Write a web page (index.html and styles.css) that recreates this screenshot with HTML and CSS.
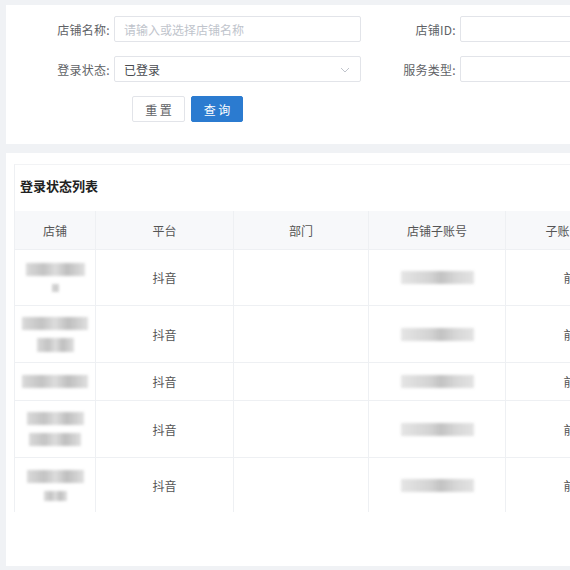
FILE: index.html
```html
<!DOCTYPE html>
<html lang="zh">
<head>
<meta charset="utf-8">
<link rel="stylesheet" href="styles.css">
</head>
<body>
<div class="page">
  <section class="card search">
    <div class="form-row">
      <div class="item">
        <label class="label l1">店铺名称:</label>
        <div class="input"><span class="ph">请输入或选择店铺名称</span></div>
      </div>
      <div class="item">
        <label class="label l2">店铺ID:</label>
        <div class="input"></div>
      </div>
    </div>
    <div class="form-row">
      <div class="item">
        <label class="label l1">登录状态:</label>
        <div class="input select"><span class="val">已登录</span>
          <svg class="chev" width="10" height="6" viewBox="0 0 10 6"><path d="M1 1l4 4 4-4" fill="none" stroke="#c0c4cc" stroke-width="1"/></svg>
        </div>
      </div>
      <div class="item">
        <label class="label l2">服务类型:</label>
        <div class="input"></div>
      </div>
    </div>
    <div class="btns">
      <button class="btn">重 置</button>
      <button class="btn primary">查 询</button>
    </div>
  </section>

  <section class="card list">
    <div class="box">
      <h2 class="title">登录状态列表</h2>
      <div class="table">
        <div class="tr th">
          <div class="c c1">店铺</div>
          <div class="c c2">平台</div>
          <div class="c c3">部门</div>
          <div class="c c4">店铺子账号</div>
          <div class="c c5">子账号登录状态</div>
        </div>
        <div class="tr r56">
          <div class="c c1 stack"><span class="blur w59"></span><span class="blur w7"></span></div>
          <div class="c c2">抖音</div>
          <div class="c c3"></div>
          <div class="c c4"><span class="blur w73"></span></div>
          <div class="c c5">前台在线</div>
        </div>
        <div class="tr r57">
          <div class="c c1 stack"><span class="blur w66"></span><span class="blur w37 tall"></span></div>
          <div class="c c2">抖音</div>
          <div class="c c3"></div>
          <div class="c c4"><span class="blur w73"></span></div>
          <div class="c c5">前台在线</div>
        </div>
        <div class="tr r38">
          <div class="c c1 stack"><span class="blur w66"></span></div>
          <div class="c c2">抖音</div>
          <div class="c c3"></div>
          <div class="c c4"><span class="blur w73"></span></div>
          <div class="c c5">前台在线</div>
        </div>
        <div class="tr r57">
          <div class="c c1 stack"><span class="blur w57"></span><span class="blur w52"></span></div>
          <div class="c c2">抖音</div>
          <div class="c c3"></div>
          <div class="c c4"><span class="blur w73"></span></div>
          <div class="c c5">前台在线</div>
        </div>
        <div class="tr r54 last">
          <div class="c c1 stack"><span class="blur w57"></span><span class="blur w23"></span></div>
          <div class="c c2">抖音</div>
          <div class="c c3"></div>
          <div class="c c4"><span class="blur w73"></span></div>
          <div class="c c5">前台在线</div>
        </div>
      </div>
    </div>
  </section>
</div>
</body>
</html>
```

FILE: styles.css
```css
html, body {
  margin: 0;
  padding: 0;
}
body {
  background: #f0f2f5;
  font-family: "Noto Sans CJK SC", "Noto Sans", sans-serif;
  font-size: 12px;
  color: #606266;
  overflow: hidden;
  width: 570px;
  height: 570px;
}
.page {
  padding: 5px 0 0 6px;
  display: flex;
  flex-direction: column;
  gap: 9px;
  width: 800px;
}
.card {
  background: #fff;
}
.search {
  height: 139px;
  box-sizing: border-box;
  padding-top: 11px;
  display: flex;
  flex-direction: column;
  gap: 14px;
}
.form-row {
  display: flex;
  height: 26px;
}
.item {
  display: flex;
  align-items: center;
}
.label {
  box-sizing: border-box;
  text-align: right;
  padding-right: 4px;
  font-size: 12px;
  color: #606266;
  letter-spacing: 0.3px;
}
.l1 { width: 108px; }
.l2 { width: 99px; }
.input {
  width: 247px;
  height: 26px;
  box-sizing: border-box;
  border: 1px solid #e2e4e9;
  border-radius: 2px;
  display: flex;
  align-items: center;
  padding-left: 9px;
  position: relative;
}
.ph { color: #c0c4cc; }
.val { color: #494b50; }
.chev {
  position: absolute;
  right: 10px;
  top: 10px;
}
.btns {
  display: flex;
  gap: 6px;
  padding-left: 126px;
}
.btn {
  height: 26px;
  width: 53px;
  border: 1px solid #e2e4e9;
  background: #fff;
  color: #606266;
  font-family: "Noto Sans CJK SC", sans-serif;
  font-size: 12px;
  border-radius: 2px;
  padding: 0;
}
.btn.primary {
  width: 52px;
  background: #2b7bd0;
  border-color: #2b7bd0;
  color: #fff;
}
.list {
  height: 413px;
  box-sizing: border-box;
  padding: 11px 0 0 8px;
}
.box {
  border-left: 1px solid #eef0f3;
  border-top: 1px solid #f2f3f5;
}
.title {
  margin: 0;
  height: 46px;
  line-height: 42px;
  padding-left: 5px;
  font-size: 13px;
  font-weight: bold;
  color: #222;
}
.tr {
  display: flex;
  border-bottom: 1px solid #eef0f3;
  box-sizing: border-box;
}
.tr.last { border-bottom: none; }
.th {
  height: 39px;
  background: #f7f8fa;
  color: #505255;
}
.r56 { height: 56px; }
.r57 { height: 57px; }
.r38 { height: 38px; }
.r54 { height: 54px; }
.c {
  box-sizing: border-box;
  border-right: 1px solid #eef0f3;
  display: flex;
  align-items: center;
  justify-content: center;
  flex-shrink: 0;
  color: #555;
}
.c1 { width: 81px; }
.c2 { width: 138px; }
.c3 { width: 135px; }
.c4 { width: 137px; }
.c5 { width: 164px; }
.stack {
  flex-direction: column;
  gap: 8px;
}
.blur {
  display: block;
  height: 13px;
  background: linear-gradient(90deg, #d6d6d6, #bdbdbd 30%, #d9d9d9 50%, #b8b8b8 70%, #dcdcdc);
  filter: blur(1.5px);
  opacity: 0.9;
}
.w59 { width: 59px; }
.w7 { width: 7px; height: 8px; }
.w66 { width: 66px; }
.w37 { width: 37px; }
.tall { height: 14px; }
.w57 { width: 57px; }
.w52 { width: 52px; }
.w23 { width: 23px; height: 10px; }
.w73 { width: 73px; background: linear-gradient(90deg, #e2e2e2, #cfcfcf 40%, #bcbcbc 55%, #d3d3d3 75%, #e0e0e0); }
```
